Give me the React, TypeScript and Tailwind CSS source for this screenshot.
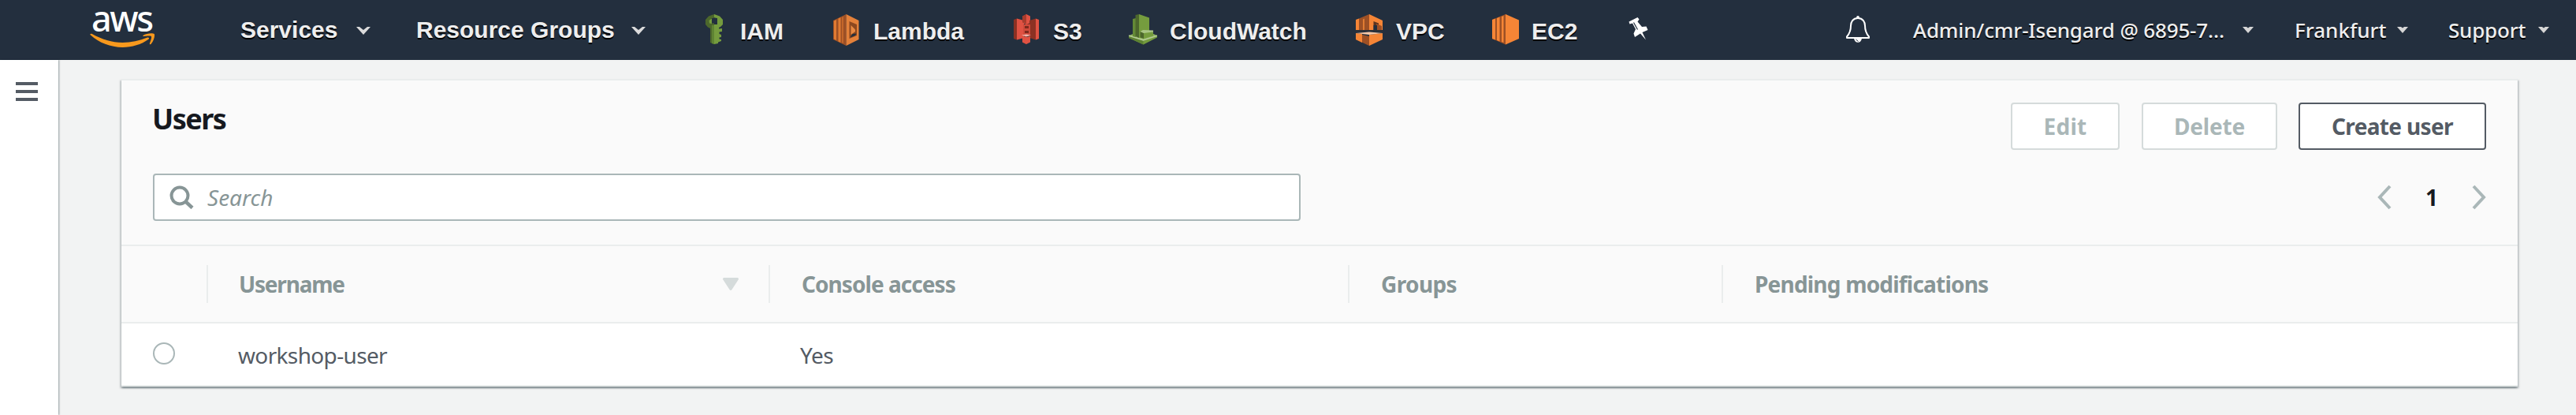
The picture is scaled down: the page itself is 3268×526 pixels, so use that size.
import type { ReactNode } from "react";

const noto = "font-['Noto_Sans',sans-serif]";
const navText = "[text-shadow:0_2px_0_#000] text-[#eee] whitespace-nowrap";

function AwsLogo() {
  return (
    <div className="flex h-[76px] w-[305px] shrink-0 flex-col pl-[114px]">
      <div className="mt-[5px] h-[36px] pl-[2px] text-[45px] leading-[36px] tracking-[-2.4px] text-white font-medium">aws</div>
      <svg width="84" height="20" viewBox="0 0 84 20" className="mt-px" fill="#f8991d">
        <path d="M0.5 1.2C0.9 0.6 1.8 0.5 2.8 1.1C15 8 28 12 41.5 12C52 12 63 9.800 73 5.600C74.700 4.900 76 6.600 74.400 7.800C65.500 14.400 53 18 41.500 18C26 18 11.800 12.300 1 2.600C0.400 2.100 0.200 1.600 0.500 1.200Z" />
        <path d="M67.500 2.900C71.500 -0.100 80.500 -0.400 81.700 1.100C82.900 2.600 81.300 10 77.400 13.900C76.500 14.800 75.500 14.300 75.900 13.100C76.900 10.500 78.800 5.300 77.900 4.100C77 2.900 71.500 3.500 68.700 3.900C67.200 4.100 66.800 3.500 67.500 2.900Z" />
      </svg>
    </div>
  );
}

function MenuChevron() {
  return (
    <svg width="18" height="10" viewBox="0 0 18 10">
      <path d="M0 0H4L9 4L14 0H18L9 10Z" fill="#dcdcdc" />
    </svg>
  );
}

function Caret() {
  return (
    <svg width="14" height="8" viewBox="0 0 14 8">
      <path d="M0 0H5L7 1.500L9 0H14L7 8Z" fill="#d6d6d6" />
    </svg>
  );
}

function IamIcon() {
  return (
    <svg width="23" height="40" viewBox="0 0 23 40">
      <path d="M11 0L4 2.500L0 7V13L3 16.500L6 18V36L11 38Z" fill="#4c672c" />
      <path d="M11 0L18 2.500L22 7V13L19 16L17 17V18.500L21 18V22L17.500 22.500V25L20 26V29L17.500 29.500V31.500L20 32V34L16 35.500V37L11 38V13H15V5L11 4.500Z" fill="#759c3e" />
      <path d="M8 14H11V38L8 37Z" fill="#5f8433" />
      <path d="M7.500 5.500L11 4.500L15 5.500V11.500H8Z" fill="#232f3e" />
      <path d="M4.500 8L8 5.500V12L5 11.500Z" fill="#759c3e" />
    </svg>
  );
}

function LambdaIcon() {
  return (
    <svg width="33" height="40" viewBox="0 0 33 40">
      <path d="M16.500 0L0 8V32L16.500 40Z" fill="#9d5025" />
      <path d="M1 8.500L4 7V33L1 31.500ZM6.500 5.500L9.500 4V36L6.500 34.500Z" fill="#e07b32" />
      <path d="M11 4L13 3V37L11 36Z" fill="#c4662a" />
      <path d="M16.500 0L32.500 8V32L16.500 40Z" fill="#e4813a" />
      <path d="M20.500 9L30 13V27L20.500 31Z" fill="#8c481f" />
      <path d="M22.500 14L28 19.500V22L22.500 26Z" fill="#e98a42" />
      <path d="M24.500 25L29.500 24.500L28 27L21.500 29.500Z" fill="#232f3e" />
    </svg>
  );
}

function S3Icon() {
  return (
    <svg width="32" height="40" viewBox="0 0 32 40">
      <path d="M0 7L4 5.500V32.500L0 31ZM11 2.500L16 0V38L11 35.500V28H21V12H11Z" fill="#8c3123" />
      <path d="M4 5.500L13 8V30L4 32.500Z" fill="#e05243" />
      <path d="M16 0L21 2.500V11L16 13L11 11V4Z" fill="#e05243" />
      <path d="M16 0V12L11 10.500V2.500Z" fill="#a83c2d" />
      <path d="M20 8L28 5.500V32.500L20 30Z" fill="#8c3123" />
      <path d="M28 5.500L32 7V31L28 32.500Z" fill="#e05243" />
      <path d="M12 13H21V26H12Z" fill="#cf4a3b" />
      <path d="M14 15H19V18H14ZM14 21H19V24H14Z" fill="#7d291d" />
      <path d="M10 26.500L16 25.500L22 26.500L16 28.500Z" fill="#f0b5ac" />
      <path d="M11 28L16 29L21 28V35.500L16 38L11 35.500Z" fill="#e05243" />
    </svg>
  );
}

function CloudWatchIcon() {
  return (
    <svg width="37" height="40" viewBox="0 0 37 40">
      <path d="M0 27L18.500 33.500L36 27V29.500L18.500 38.500L0 30Z" fill="#759c3e" />
      <path d="M0 27L18.500 33.500V38.500L0 30Z" fill="#5d8232" />
      <path d="M0 27L7 24.500L31 25L36 27L18.500 33.500Z" fill="#8fb361" />
      <path d="M0 26.500L18.500 32L36 26.500V28L18.500 33.800L0 28Z" fill="#b5cc96" />
      <path d="M5 6L9 5V29L5 28Z" fill="#648a36" />
      <path d="M8.500 1L13 0V30L8.500 28Z" fill="#4c672c" />
      <path d="M13 0L26 4.500V28L13 30Z" fill="#759c3e" />
      <path d="M14.500 22L19 24V31L14.500 29.500Z" fill="#4c672c" />
      <path d="M19 23.500L31 22V27.500L19 31Z" fill="#759c3e" />
      <path d="M14.500 22L18 20L31 20.500V22.500L19 24Z" fill="#a9c585" />
    </svg>
  );
}

function VpcIcon() {
  return (
    <svg width="35" height="40" viewBox="0 0 35 40">
      <path d="M0 7L4 5.500V20H0Z" fill="#f58536" />
      <path d="M4 5.500L17 0V20H4ZM0 24L17 28V40L0 32Z" fill="#9d5025" />
      <path d="M0 24L8 25V36L0 32Z" fill="#f58536" />
      <path d="M9 6.500L11 5.500V20H9Z" fill="#e07b32" />
      <path d="M17 0L34 8V20H17ZM17 26L34 24V32L17 40Z" fill="#f58536" />
      <path d="M22.500 9L29 11.500V20H22.500Z" fill="#5b3420" />
      <path d="M26 12L33 15V20H26Z" fill="#9d5025" />
      <path d="M22.500 14H27V20H22.500Z" fill="#232f3e" />
      <path d="M0 20H34V22.500L17 21.500L0 22.500Z" fill="#2c3038" />
      <path d="M0 24L17 22.500L34 24L17 26Z" fill="#f6c6a5" />
    </svg>
  );
}

function Ec2Icon() {
  return (
    <svg width="35" height="40" viewBox="0 0 35 40">
      <path d="M17 0L0 7V31L17 38.500Z" fill="#9d5025" />
      <path d="M0 7L4 5.500V32.500L0 31ZM6 5L9.500 3.500V34.500L6 33ZM12 3L14.500 2V36L12 35Z" fill="#f58536" />
      <path d="M17 0L34 7.500V31L17 38.500Z" fill="#f58536" />
    </svg>
  );
}

function PinIcon() {
  return (
    <svg width="26" height="30" viewBox="0 0 26 30" fill="#fff">
      <path d="M0.500 5.500L11.500 0L13.500 2.500L11.500 5.500L17 12L22.500 11.500L24.500 16L17.500 19L22 28.500L15 20.500L8 25L6.500 20.500L9 15L5 7.500L1.500 8.500Z" />
      <path d="M6.500 6.500L11.500 15.500" stroke="#232f3e" strokeWidth="1.200" />
    </svg>
  );
}

function BellIcon() {
  return (
    <svg width="32" height="34" viewBox="0 0 32 34" fill="none" stroke="#fff" strokeWidth="2">
      <path d="M16 3C9.500 3 7 8 7 12.500C7 19 5.500 22.500 2 26.500V28H30V26.500C26.500 22.500 25 19 25 12.500C25 8 22.500 3 16 3Z" strokeLinejoin="round" />
      <circle cx="16" cy="2" r="1.900" fill="#fff" stroke="none" />
      <path d="M11 28.500C11.500 32 13.500 33.800 16 33.800S20.500 32 21 28.500Z" fill="#fff" stroke="none" />
      <path d="M13.500 30L16.500 32.500" stroke="#232f3e" strokeWidth="1" />
    </svg>
  );
}

type Shortcut = { label: string; icon: ReactNode; iconBox: string; labelBox: string };

const shortcuts: Shortcut[] = [
  { label: "IAM", icon: <IamIcon />, iconBox: "w-[43px]", labelBox: "w-[119px]" },
  { label: "Lambda", icon: <LambdaIcon />, iconBox: "w-[50px]", labelBox: "w-[179px]" },
  { label: "S3", icon: <S3Icon />, iconBox: "w-[49px]", labelBox: "w-[97px]" },
  { label: "CloudWatch", icon: <CloudWatchIcon />, iconBox: "w-[51px]", labelBox: "w-[237px]" },
  { label: "VPC", icon: <VpcIcon />, iconBox: "w-[50px]", labelBox: "w-[123px]" },
  { label: "EC2", icon: <Ec2Icon />, iconBox: "w-[49px]", labelBox: "w-[124px]" },
];

function NavBar() {
  return (
    <header className={`flex h-[76px] w-full shrink-0 bg-[#232f3e] ${noto}`}>
      <AwsLogo />
      <nav className={`flex font-['Liberation_Sans',sans-serif] text-[30px] font-bold ${navText}`}>
        <div className="w-[147px] leading-[76px]">Services</div>
        <div className="w-[75px] pt-[34px]"><MenuChevron /></div>
        <div className="w-[274px] pl-px leading-[76px]">Resource Groups</div>
        <div className="w-[94px] pt-[34px]"><MenuChevron /></div>
        {shortcuts.map((s) => (
          <div key={s.label} className="flex">
            <div className={`${s.iconBox} pt-[18px]`}>{s.icon}</div>
            <div className={`${s.labelBox} pl-px leading-[79px]`}>{s.label}</div>
          </div>
        ))}
        <div className="pt-[22px]"><PinIcon /></div>
      </nav>
      <div className={`ml-auto flex pr-[34px] text-[26px] leading-[76px] font-medium ${navText}`}>
        <div className="w-[86px] pt-[20px]"><BellIcon /></div>
        <div className="w-[418px] tracking-[-0.15px]">Admin/cmr-Isengard @ 6895-7...</div>
        <div className="w-[66px] pt-[34px]"><Caret /></div>
        <div className="w-[130px]">Frankfurt</div>
        <div className="w-[65px] pt-[34px]"><Caret /></div>
        <div className="w-[114px] tracking-[-0.2px]">Support</div>
        <div className="w-[14px] pt-[34px]"><Caret /></div>
      </div>
    </header>
  );
}

function PageArrow({ flip = false }: { flip?: boolean }) {
  return (
    <svg width="18" height="32" viewBox="0 0 18 32" fill="none" stroke="#aab7b8" strokeWidth="4">
      <path d={flip ? "M2 2L15 16L2 30" : "M16 2L3 16L16 30"} />
    </svg>
  );
}

const button = "flex h-[60px] items-center justify-center rounded-[4px] border-2 bg-white font-bold whitespace-nowrap";

function CardHeader() {
  return (
    <div className="flex h-[208px] flex-col bg-[#fafafa] px-10 pt-7">
      <div className="flex h-[60px] items-start justify-between">
        <h2 className="-ml-px text-[36px] leading-[41px] font-bold tracking-[-1.5px] text-[#16191f]">Users</h2>
        <div className="flex text-[28px]">
          <button className={`${button} w-[138px] border-[#d5dbdb] tracking-[0.3px] text-[#aab7b8]`}>Edit</button>
          <button className={`${button} ml-7 w-[172px] border-[#d5dbdb] tracking-[-0.2px] text-[#aab7b8]`}>Delete</button>
          <button className={`${button} ml-[27px] w-[238px] border-[#545b64] tracking-[-0.65px] text-[#545b64]`}>Create user</button>
        </div>
      </div>
      <div className="mt-[30px] flex items-center justify-between">
        <div className="flex h-[60px] w-[1456px] items-center rounded-[4px] border-2 border-[#aab7b8] bg-white pl-[19px]">
          <svg width="31" height="30" viewBox="0 0 31 30" fill="none" stroke="#879596" strokeWidth="4">
            <circle cx="13" cy="13" r="10.500" />
            <path d="M20.500 20.500L29 28.500" strokeWidth="4.500" />
          </svg>
          <span className="ml-[17px] text-[28px] text-[#879596] italic">Search</span>
        </div>
        <div className="flex items-center">
          <PageArrow />
          <span className="w-[102px] text-center text-[28px] leading-[38px] font-bold text-[#16191f]">1</span>
          <PageArrow flip />
        </div>
      </div>
    </div>
  );
}

const columns = "grid grid-cols-[110px_713px_735px_474px_1fr]";
const headCell = "flex h-12 items-center border-r-2 border-[#eaeded]";

function UsersTable() {
  return (
    <div className="text-[28px]">
      <div className={`${columns} h-[100px] items-center border-y-2 border-[#eaeded] bg-[#fafafa] font-bold text-[#879596]`}>
        <div className={headCell} />
        <div className={`${headCell} justify-between pr-[38px] pl-[39px] tracking-[-1.2px]`}>
          Username
          <svg width="20" height="16" viewBox="0 0 20 16" fill="#d5dbdb">
            <path d="M2 0H18C20 0 20.500 1.500 19.500 2.800L11.500 15C10.700 16.200 9.300 16.200 8.500 15L0.500 2.800C-0.500 1.500 0 0 2 0Z" />
          </svg>
        </div>
        <div className={`${headCell} pl-10 tracking-[-0.95px]`}>Console access</div>
        <div className={`${headCell} pl-10 tracking-[-0.6px]`}>Groups</div>
        <div className="flex h-12 items-center pl-10 tracking-[-0.8px]">Pending modifications</div>
      </div>
      <div className={`${columns} h-[80px] border-b-2 border-[#eaeded] bg-white leading-[81px] text-[#545b64]`}>
        <div className="pt-6 pl-10">
          <div className="size-7 rounded-full border-2 border-[#aab7b8] bg-white" />
        </div>
        <div className="pl-[38px] tracking-[-0.65px]">workshop-user</div>
        <div className="pl-[38px] tracking-[-0.5px]">Yes</div>
        <div />
        <div />
      </div>
    </div>
  );
}

export default function App() {
  return (
    <div className={`flex h-[526px] w-[3268px] flex-col bg-[#f2f3f3] ${noto}`}>
      <NavBar />
      <div className="flex flex-1">
        <aside className="w-[74px] shrink-0 bg-white pt-7 pl-5 shadow-[1px_0_2px_0_rgba(0,28,36,0.4)]">
          <div className="flex w-7 flex-col gap-[6px]">
            <div className="h-1 bg-[#545b64]" />
            <div className="h-1 bg-[#545b64]" />
            <div className="h-1 bg-[#545b64]" />
          </div>
        </aside>
        <main className="pt-6 pl-20">
          <section className="w-[3040px] border-t-2 border-[#eaeded] shadow-[0_2px_2px_0_rgba(0,28,36,0.3),2px_2px_2px_0_rgba(0,28,36,0.15),-2px_2px_2px_0_rgba(0,28,36,0.15)]">
            <CardHeader />
            <UsersTable />
          </section>
        </main>
      </div>
    </div>
  );
}
